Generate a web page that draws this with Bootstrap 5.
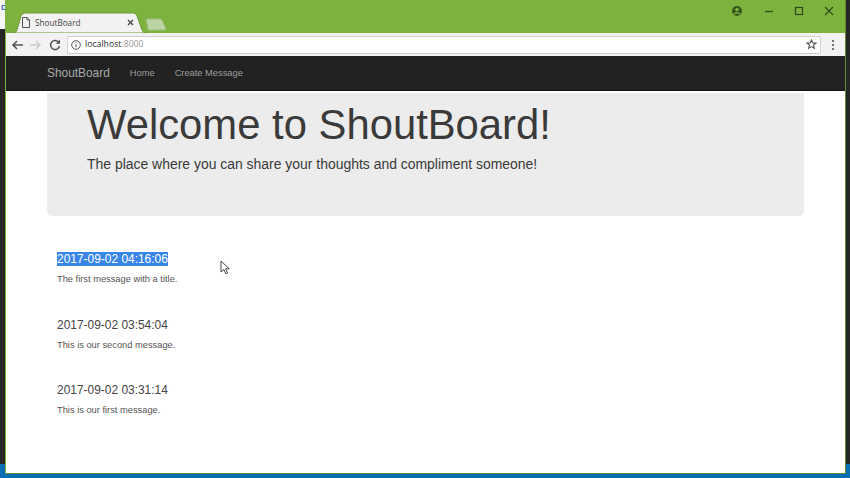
<!doctype html>
<html lang="en">
<head>
<meta charset="utf-8">
<title>ShoutBoard</title>
<link href="https://cdn.jsdelivr.net/npm/bootstrap@5.3.0/dist/css/bootstrap.min.css" rel="stylesheet">
<style>
html,body{height:478px;overflow:hidden}
body{font-family:"Liberation Sans",Arial,sans-serif;background:#262626;color:#333;position:relative}
.desk-top{position:absolute;left:0;top:0;width:6px;height:29px;background:#f4f6f8;overflow:hidden;font-size:8px;line-height:10px;font-weight:700;color:#2a6fb5;padding-top:3px;text-indent:1px}
.desk-bottom{position:absolute;left:0;right:0;bottom:0;height:14px;background:#0b6fb5}
.win{position:absolute;left:5px;top:0;width:841px;height:474px;background:#fff;border-left:1px solid #7cb13f;border-right:1px solid #5f8a32;border-bottom:1px solid #5f8a32;display:flex;flex-direction:column;overflow:hidden}
.strip{height:33px;background:#7eb23f;flex:none;position:relative}
.tab-shape{position:absolute;left:5px;top:12px}
.tab-label{position:absolute;left:29px;top:17px;font-size:8.2px;line-height:12px;color:#444;font-family:"Open Sans","Liberation Sans",sans-serif}
.tab-x{position:absolute;left:121px;top:19px}
.page-ic{position:absolute;left:16px;top:17px}
.new-tab{position:absolute;left:139px;top:18px}
.win-ctl{position:absolute;top:5px;display:block}
.tools{height:23px;background:#f2f2f2;flex:none;display:flex;align-items:center;padding:0 10px 0 2px}
.nav-ic{width:18px;height:14px;flex:none;margin-right:1px}
.addr{flex:1;height:18px;margin-left:2px;margin-right:10px;background:#fff;border:1px solid #cfcfcf;border-radius:2px;display:flex;align-items:center;font-size:8.700px;color:#333;padding:0 3px;font-family:"Open Sans","Liberation Sans",sans-serif}
.addr b{font-weight:400}
.addr i{font-style:normal;color:#999}
.sb-bar{height:35px;flex:none;background:#222;padding:0 0 0 41px!important;border-bottom:1px solid #111;justify-content:flex-start!important}
.sb-bar .navbar-brand{font-size:11.900px;color:#a8a8a8;padding:0;margin:0 20px 0 0;line-height:16px}
.sb-bar .navbar-nav .nav-link{font-size:9.300px;color:#9d9d9d;padding:0;margin-right:20px;line-height:16px}
.hero{margin:2px 41px 0 41px;height:123px;background:#ececec;border-radius:0 0 5px 5px;padding:7px 40px 0;flex:none}
.hero h1{font-size:41.800px;line-height:50px;font-weight:400;margin:0 0 4px;color:#3a3a3a;font-family:"Liberation Sans",sans-serif}
.hero p{font-size:13.950px;line-height:20px;margin:0;color:#3a3a3a}
.msgs{padding:35px 0 0 51px}
.msg{height:65.700px}
.msg h3{font-size:11.950px;line-height:16px;font-weight:400;margin:0 0 5px;color:#444}
.msg h3 .sel{background:#3a86e8;color:#fff}
.msg p{font-size:9.300px;line-height:14px;margin:0;color:#555}
.cursor{position:absolute;left:220px;top:260px}
</style>
</head>
<body>
<div class="desk-top">D</div>
<div class="desk-bottom"></div>
<div class="win">
  <div class="strip">
    <svg class="tab-shape" width="135" height="21" viewBox="0 0 135 21"><path d="M0 21 L3 21 Q5 21 6 18 L10 4 Q11 1 14 1 L122 1 Q125 1 126 4 L131 18 Q132 21 135 21 Z" fill="#f2f2f2" stroke="#6d9a37" stroke-width="1"/></svg>
    <svg class="page-ic" width="8" height="11" viewBox="0 0 8 11"><path d="M.5.5h4.500l2.500 2.500v7.500h-7z M5 .5v2.500h2.500" fill="none" stroke="#555" stroke-width="1"/></svg>
    <span class="tab-label">ShoutBoard</span>
    <svg class="tab-x" width="7" height="7" viewBox="0 0 7 7"><path d="M1 1l5 5M6 1l-5 5" stroke="#444" stroke-width="1.300"/></svg>
    <svg class="new-tab" width="22" height="13" viewBox="0 0 22 13"><path d="M1 1h14q1 0 2 1l4 9q0 1-1 1H4q-1 0-1-1z" fill="#bcd3a4" stroke="#9dbb7f"/></svg>
    <svg class="win-ctl" style="left:725px" width="12" height="12" viewBox="0 0 12 12"><circle cx="6" cy="6" r="5" fill="#37571a"/><circle cx="6" cy="4.500" r="1.800" fill="#7eb23f"/><path d="M2.800 9.200q3.200-3 6.400 0" stroke="#7eb23f" stroke-width="1.300" fill="none"/></svg>
    <svg class="win-ctl" style="left:757px" width="12" height="12" viewBox="0 0 12 12"><path d="M2 6.500h8" stroke="#2f4a16" stroke-width="1.300"/></svg>
    <svg class="win-ctl" style="left:787px" width="12" height="12" viewBox="0 0 12 12"><rect x="2.500" y="2.500" width="7" height="7" fill="none" stroke="#2f4a16" stroke-width="1.200"/></svg>
    <svg class="win-ctl" style="left:817px" width="12" height="12" viewBox="0 0 12 12"><path d="M2 2l8 8M10 2l-8 8" stroke="#2f4a16" stroke-width="1.100"/></svg>
  </div>
  <div class="tools">
    <svg class="nav-ic" viewBox="0 0 18 14"><path d="M15 7H5M9 3L5 7l4 4" fill="none" stroke="#555" stroke-width="1.600"/></svg>
    <svg class="nav-ic" viewBox="0 0 18 14"><path d="M3 7h10M9 3l4 4-4 4" fill="none" stroke="#ccc" stroke-width="1.600"/></svg>
    <svg class="nav-ic" viewBox="0 0 18 14"><path d="M12.800 4.500A4.500 4.500 0 1 0 13.500 8" fill="none" stroke="#555" stroke-width="1.500"/><path d="M14 1.500v4.200H9.800z" fill="#555"/></svg>
    <div class="addr">
      <svg class="me-1" width="10" height="10" viewBox="0 0 10 10"><circle cx="5" cy="5" r="4.300" fill="none" stroke="#555"/><path d="M5 4.300v3M5 2.400v1" stroke="#555"/></svg>
      <b>localhost</b><i>:8000</i>
      <svg class="ms-auto" width="11" height="11" viewBox="0 0 11 11"><path d="M5.500 1l1.300 3h3.200L7.500 6.100l.9 3.300-2.900-1.800-2.900 1.800.9-3.300L1 4h3.200z" fill="none" stroke="#555" stroke-width="1.100"/></svg>
    </div>
    <svg width="4" height="12" viewBox="0 0 4 12"><circle cx="2" cy="2" r="1.100" fill="#555"/><circle cx="2" cy="6" r="1.100" fill="#555"/><circle cx="2" cy="10" r="1.100" fill="#555"/></svg>
  </div>
  <nav class="navbar navbar-expand sb-bar">
    <a class="navbar-brand" href="#">ShoutBoard</a>
    <div class="navbar-nav flex-row">
      <a class="nav-link" href="#">Home</a>
      <a class="nav-link" href="#">Create Message</a>
    </div>
  </nav>
  <div class="hero">
    <h1>Welcome to ShoutBoard!</h1>
    <p>The place where you can share your thoughts and compliment someone!</p>
  </div>
  <div class="msgs">
    <div class="msg"><h3><span class="sel">2017-09-02 04:16:06</span></h3><p>The first message with a title.</p></div>
    <div class="msg"><h3>2017-09-02 03:54:04</h3><p>This is our second message.</p></div>
    <div class="msg"><h3>2017-09-02 03:31:14</h3><p>This is our first message.</p></div>
  </div>
</div>
<svg class="cursor" width="11" height="15" viewBox="0 0 11 15"><path d="M1 1v11l2.800-2.500 2 4.300 1.800-.8-2-4.200h3.700z" fill="#fff" stroke="#444" stroke-width="1"/></svg>
</body>
</html>
